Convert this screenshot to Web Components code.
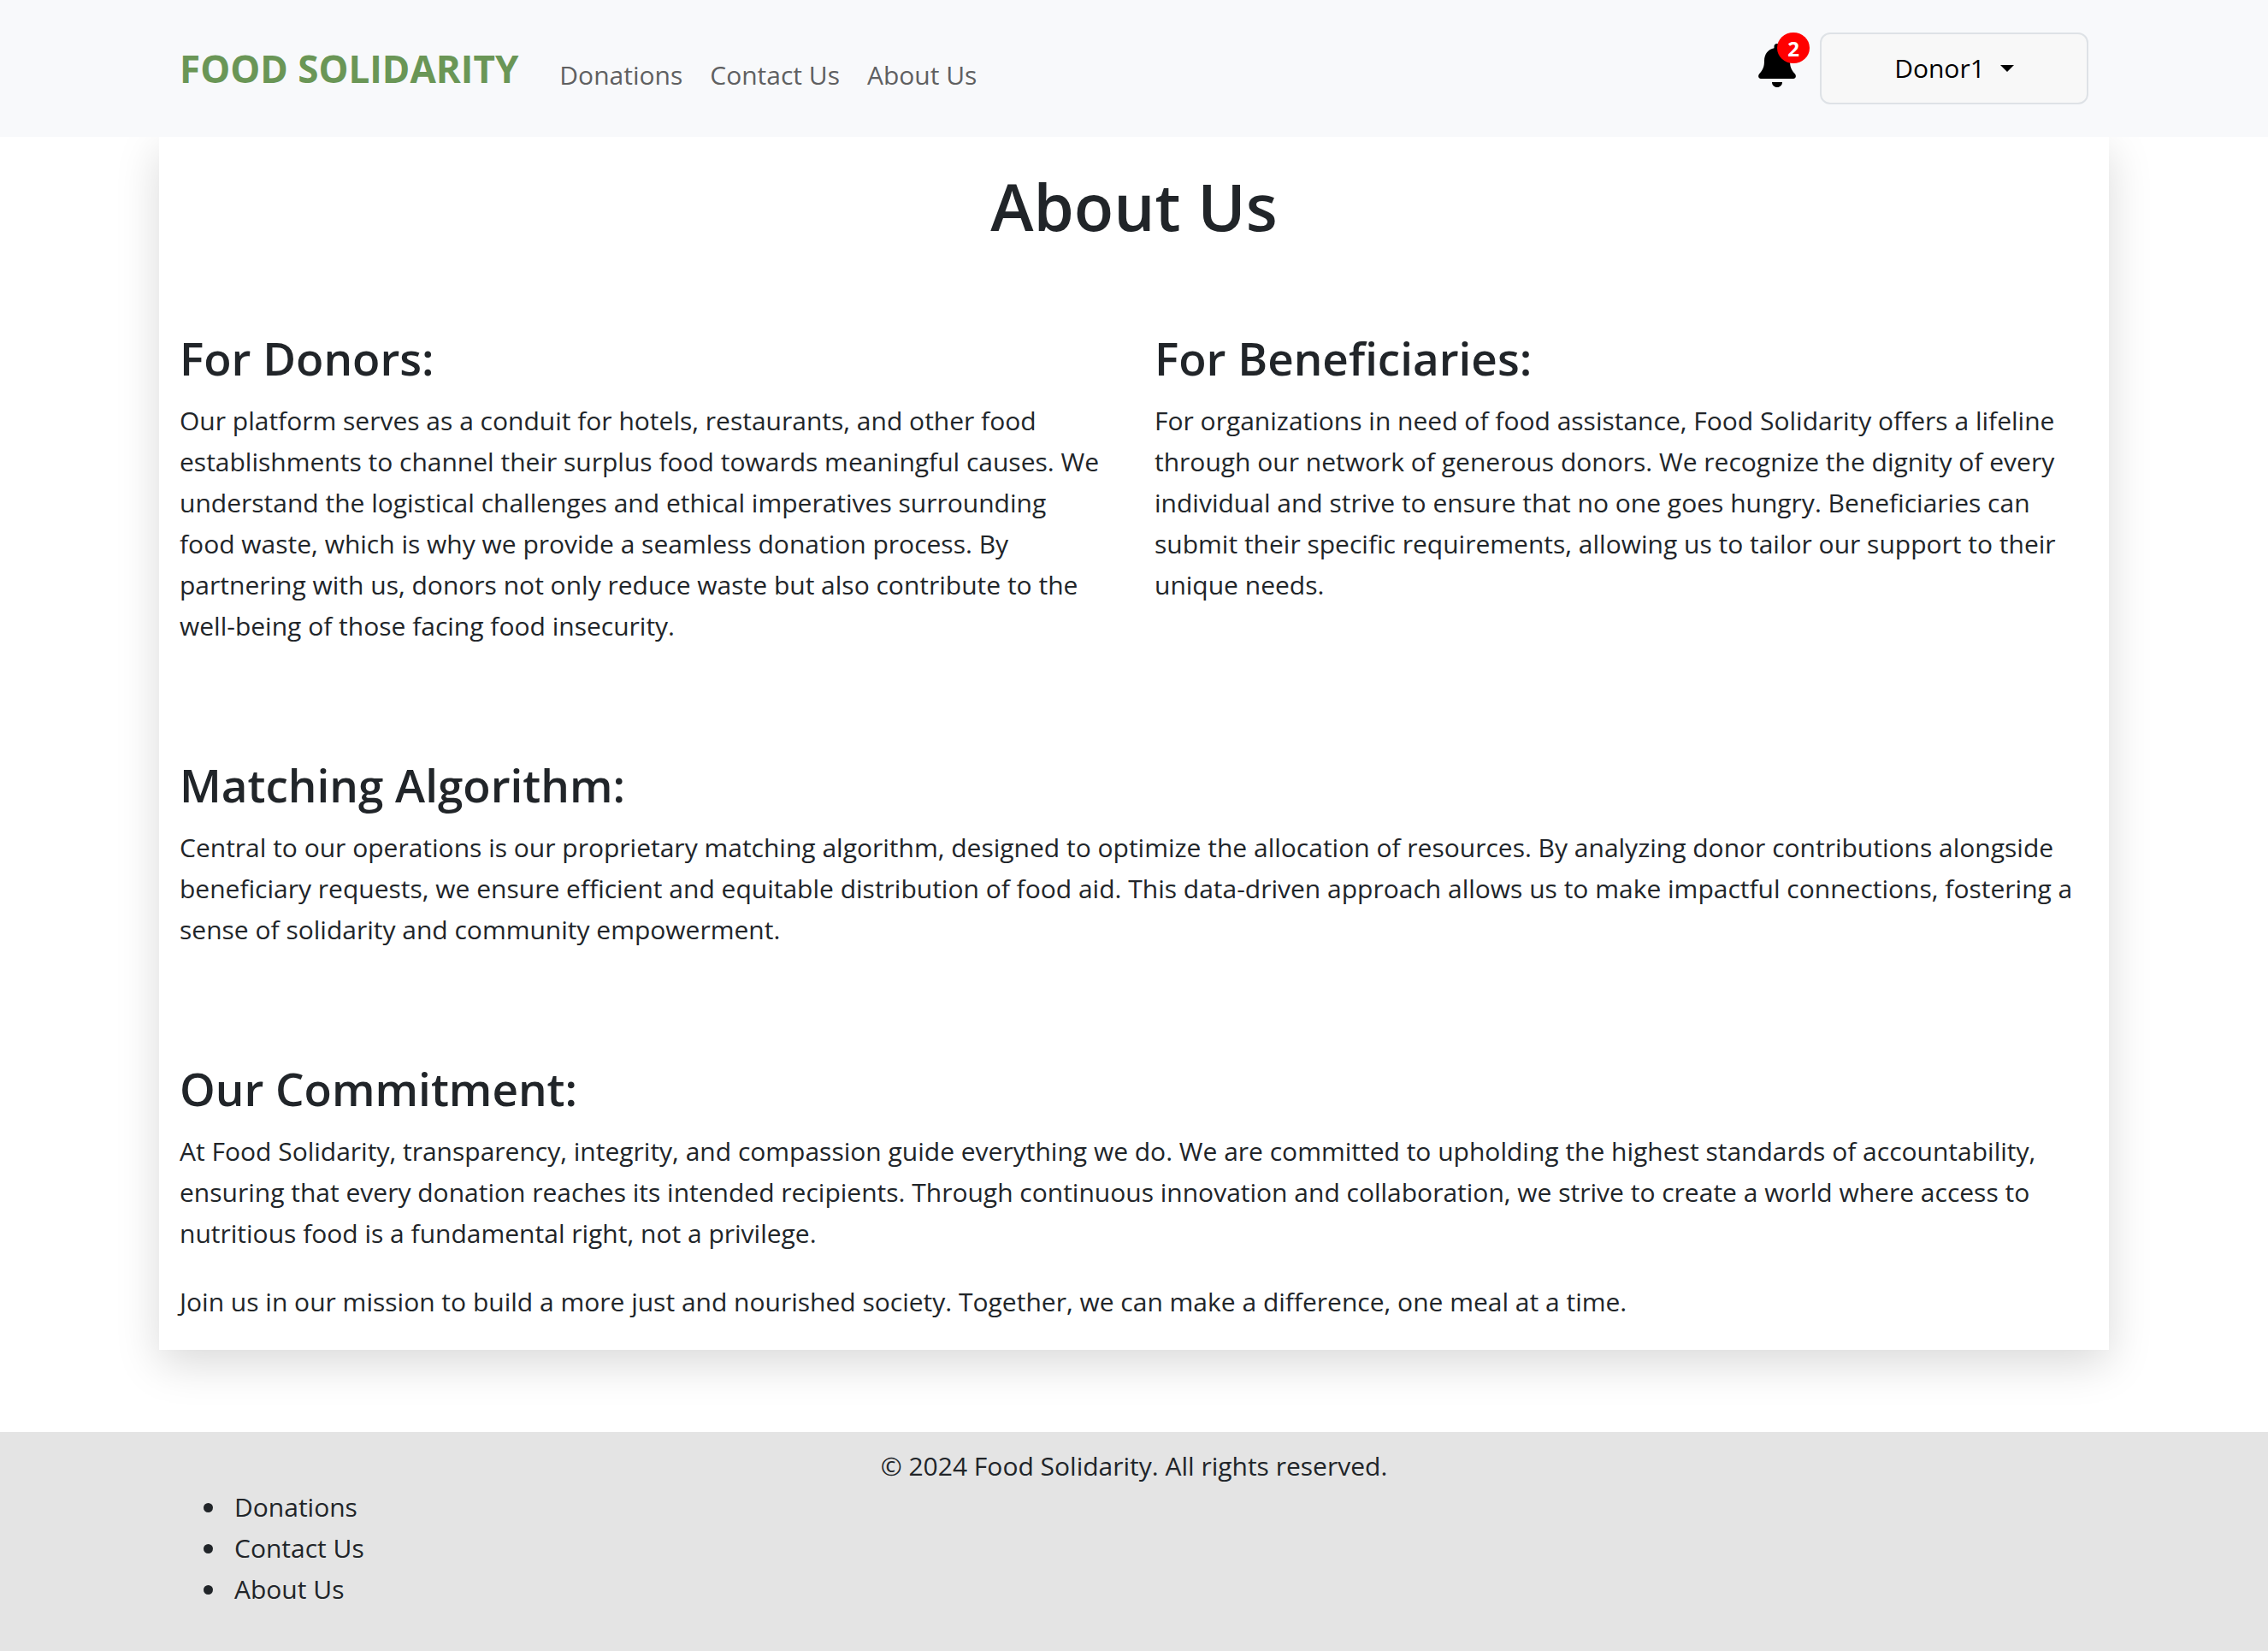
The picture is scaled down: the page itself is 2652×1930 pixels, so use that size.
<!DOCTYPE html>
<html lang="en">
<head>
<meta charset="utf-8">
<title>Food Solidarity – About Us</title>
<style>
  html, body { margin: 0; }
  body {
    font-family: "Segoe UI", "Open Sans", "Noto Sans", sans-serif;
    font-size: 30px;
    line-height: 48px;
    color: #212529;
    background: #fff;
  }
</style>
</head>
<body>
<fs-app></fs-app>

<template id="fs-app">
  <style>
    :host { display: flex; flex-direction: column; min-height: 100vh; }
    main { flex: 1; display: flex; flex-direction: column; padding-bottom: 96px; }
    .row { display: grid; grid-template-columns: 1fr 1fr; gap: 48px; }
  </style>
  <fs-navbar></fs-navbar>
  <main>
    <fs-card heading="About Us">
      <div class="row">
        <fs-section heading="For Donors:">
          <p>Our platform serves as a conduit for hotels, restaurants, and other food establishments to channel their surplus food towards meaningful causes. We understand the logistical challenges and ethical imperatives surrounding<br>food waste, which is why we provide a seamless donation process. By partnering with us, donors not only reduce waste but also contribute to the well-being of those facing food insecurity.</p>
        </fs-section>
        <fs-section heading="For Beneficiaries:">
          <p>For organizations in need of food assistance, Food Solidarity offers a lifeline through our network of generous donors. We recognize the dignity of every individual and strive to ensure that no one goes hungry. Beneficiaries can submit their specific requirements, allowing us to tailor our support to their unique needs.</p>
        </fs-section>
      </div>
      <fs-section heading="Matching Algorithm:">
        <p>Central to our operations is our proprietary matching algorithm, designed to optimize the allocation of resources. By analyzing donor contributions alongside beneficiary requests, we ensure efficient and equitable distribution of food aid. This data-driven approach allows us to make impactful connections, fostering a sense of solidarity and community empowerment.</p>
      </fs-section>
      <fs-section heading="Our Commitment:">
        <p>At Food Solidarity, transparency, integrity, and compassion guide everything we do. We are committed to upholding the highest standards of accountability, ensuring that every donation reaches its intended recipients. Through continuous innovation and collaboration, we strive to create a world where access to nutritious food is a fundamental right, not a privilege.</p>
        <p>Join us in our mission to build a more just and nourished society. Together, we can make a difference, one meal at a time.</p>
      </fs-section>
    </fs-card>
  </main>
  <fs-footer></fs-footer>
</template>

<template id="fs-navbar">
  <style>
    :host { display: block; background: #f8f9fb; position: relative; z-index: 1; }
    .inner {
      box-sizing: border-box; max-width: 2280px; height: 160px; margin: 0 auto; padding: 0 24px;
      display: flex; align-items: center;
    }
    .brand { color: #6a9656; font-size: 44px; font-weight: 700; line-height: 64px; text-decoration: none; }
    nav { display: flex; gap: 32px; margin-left: 48px; padding-top: 16px; }
    nav a { color: #5f6061; text-decoration: none; }
    .tools { display: flex; align-items: center; gap: 12px; margin-left: auto; }
  </style>
  <div class="inner">
    <a class="brand" href="#">FOOD SOLIDARITY</a>
    <nav>
      <a href="#">Donations</a>
      <a href="#">Contact Us</a>
      <a href="#">About Us</a>
    </nav>
    <div class="tools">
      <fs-bell count="2"></fs-bell>
      <fs-user-menu>Donor1</fs-user-menu>
    </div>
  </div>
</template>

<template id="fs-bell">
  <style>
    :host { display: block; }
    button {
      position: relative; display: block; width: 60px; height: 84px; padding: 0 0 6px;
      border: 0; background: none; font: inherit; cursor: pointer;
    }
    svg { display: block; width: 44px; height: 52px; }
    .count {
      position: absolute; top: 0; right: 0; width: 38px; height: 36px; border-radius: 50%;
      background: #f00; color: #fff; font-size: 24px; font-weight: 700; line-height: 38px; text-align: center;
    }
  </style>
  <button type="button" aria-label="Notifications">
    <svg viewBox="0 0 44 52" aria-hidden="true">
      <path d="M22 0a3.500 3.500 0 0 0-3.500 3.500v1.800C11.500 6.700 7 12.500 7 20c0 7-1.500 10.500-6 15.500C-.8 38 .3 41 3 41h38c2.700 0 3.800-3 2-5.500-4.500-5-6-8.500-6-15.500 0-7.500-4.500-13.300-11.500-14.700V3.500A3.500 3.500 0 0 0 22 0z"/>
      <path d="M16 45h12c0 3.600-2.600 6-6 6s-6-2.400-6-6z"/>
    </svg>
    <span class="count"></span>
  </button>
</template>

<template id="fs-user-menu">
  <style>
    :host { display: block; }
    button {
      box-sizing: border-box; width: 314px; height: 84px; padding: 0;
      display: flex; align-items: center; justify-content: center; gap: 18px;
      border: 2px solid #dee2e6; border-radius: 12px; background: #f8f8f8;
      color: #000; font: inherit; cursor: pointer;
    }
    i { border: 8px solid transparent; border-top-color: #000; border-bottom: 0; }
  </style>
  <button type="button" aria-haspopup="true"><slot></slot><i></i></button>
</template>

<template id="fs-card">
  <style>
    :host {
      display: block; flex: 1; box-sizing: border-box; width: 100%; max-width: 2280px; margin: 0 auto;
      padding: 33px 24px 0; background: #fff; box-shadow: 0 16px 48px rgba(0, 0, 0, .15);
    }
    h1 { margin: 0 0 96px; font-size: 76px; font-weight: 600; line-height: 96px; text-align: center; }
    .body { display: flex; flex-direction: column; gap: 96px; }
  </style>
  <h1></h1>
  <div class="body"><slot></slot></div>
</template>

<template id="fs-section">
  <style>
    :host { display: block; }
    h2 { margin: 0 0 16px; font-size: 53px; font-weight: 600; line-height: 67px; }
    ::slotted(p) { margin: 0 0 32px; }
  </style>
  <h2></h2>
  <slot></slot>
</template>

<template id="fs-footer">
  <style>
    :host { display: block; background: #e4e4e4; }
    footer { box-sizing: border-box; max-width: 2280px; margin: 0 auto; padding: 16px 24px; }
    p { margin: 0; text-align: center; }
    ul { margin: 0 0 32px; padding-left: 56px; }
    li { padding-left: 8px; }
    a { color: inherit; text-decoration: none; }
  </style>
  <footer>
    <p>© 2024 Food Solidarity. All rights reserved.</p>
    <ul>
      <li><a href="#">Donations</a></li>
      <li><a href="#">Contact Us</a></li>
      <li><a href="#">About Us</a></li>
    </ul>
  </footer>
</template>

<script>
  class FsElement extends HTMLElement {
    constructor() {
      super();
      const template = document.getElementById(this.localName);
      this.attachShadow({ mode: 'open' }).append(template.content.cloneNode(true));
    }
    fill(selector, attribute) {
      this.shadowRoot.querySelector(selector).textContent = this.getAttribute(attribute) || '';
    }
  }
  customElements.define('fs-bell', class extends FsElement {
    connectedCallback() { this.fill('.count', 'count'); }
  });
  customElements.define('fs-user-menu', class extends FsElement {});
  customElements.define('fs-navbar', class extends FsElement {});
  customElements.define('fs-section', class extends FsElement {
    connectedCallback() { this.fill('h2', 'heading'); }
  });
  customElements.define('fs-card', class extends FsElement {
    connectedCallback() { this.fill('h1', 'heading'); }
  });
  customElements.define('fs-footer', class extends FsElement {});
  customElements.define('fs-app', class extends FsElement {});
</script>
</body>
</html>
